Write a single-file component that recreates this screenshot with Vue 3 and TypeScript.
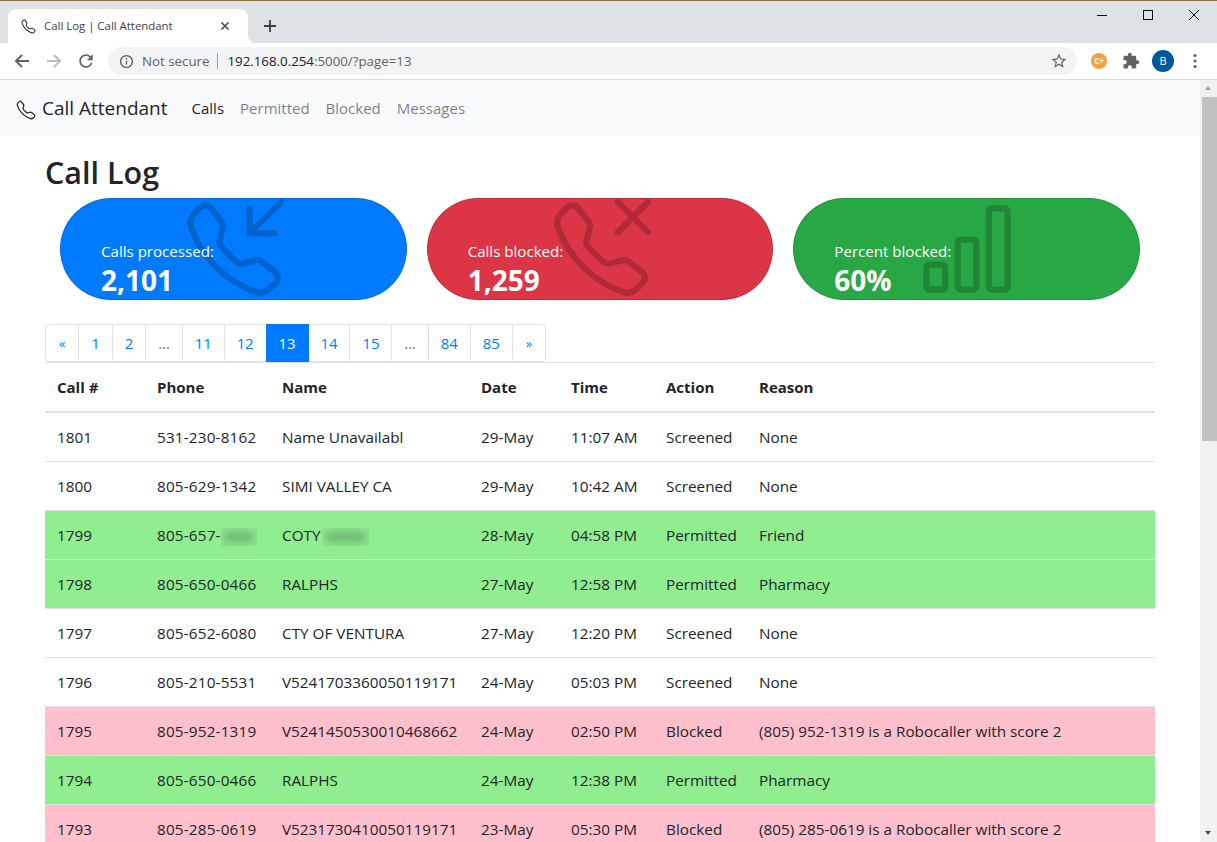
<script setup lang="ts">
interface Call {
  id: number
  phone: string
  name: string
  date: string
  time: string
  action: string
  reason: string
  blurPhone?: boolean
}

const phonePath =
  'M3.925 1.745a.636.636 0 0 0-.951-.059l-.97.970c-.453.453-.62 1.095-.421 1.658A16.470 16.470 0 0 0 5.490 10.510a16.470 16.470 0 0 0 6.196 3.907c.563.198 1.205.032 1.658-.421l.970-.970a.636.636 0 0 0-.060-.951l-2.162-1.682a.636.636 0 0 0-.544-.115l-2.052.513a1.636 1.636 0 0 1-1.554-.430L5.640 8.058a1.636 1.636 0 0 1-.430-1.554l.513-2.052a.636.636 0 0 0-.115-.544L3.925 1.745zM2.267.980a1.636 1.636 0 0 1 2.448.153l1.681 2.162c.309.396.418.913.296 1.400l-.513 2.053a.636.636 0 0 0 .167.604L8.650 9.654a.636.636 0 0 0 .604.167l2.052-.513a1.636 1.636 0 0 1 1.401.296l2.162 1.681c.777.604.849 1.753.153 2.448l-.970.970c-.693.693-1.730.998-2.697.658a17.470 17.470 0 0 1-6.571-4.144A17.470 17.470 0 0 1 .639 4.646c-.34-.967-.035-2.004.658-2.698l.970-.969z'

const pages = ['«', '1', '2', '...', '11', '12', '13', '14', '15', '...', '84', '85', '»']

const calls: Call[] = [
  { id: 1801, phone: '531-230-8162', name: 'Name Unavailabl', date: '29-May', time: '11:07 AM', action: 'Screened', reason: 'None' },
  { id: 1800, phone: '805-629-1342', name: 'SIMI VALLEY CA', date: '29-May', time: '10:42 AM', action: 'Screened', reason: 'None' },
  { id: 1799, phone: '805-657-', name: 'COTY', date: '28-May', time: '04:58 PM', action: 'Permitted', reason: 'Friend', blurPhone: true },
  { id: 1798, phone: '805-650-0466', name: 'RALPHS', date: '27-May', time: '12:58 PM', action: 'Permitted', reason: 'Pharmacy' },
  { id: 1797, phone: '805-652-6080', name: 'CTY OF VENTURA', date: '27-May', time: '12:20 PM', action: 'Screened', reason: 'None' },
  { id: 1796, phone: '805-210-5531', name: 'V5241703360050119171', date: '24-May', time: '05:03 PM', action: 'Screened', reason: 'None' },
  { id: 1795, phone: '805-952-1319', name: 'V5241450530010468662', date: '24-May', time: '02:50 PM', action: 'Blocked', reason: '(805) 952-1319 is a Robocaller with score 2' },
  { id: 1794, phone: '805-650-0466', name: 'RALPHS', date: '24-May', time: '12:38 PM', action: 'Permitted', reason: 'Pharmacy' },
  { id: 1793, phone: '805-285-0619', name: 'V5231730410050119171', date: '23-May', time: '05:30 PM', action: 'Blocked', reason: '(805) 285-0619 is a Robocaller with score 2' },
]

function rowClass(call: Call) {
  if (call.action === 'Permitted') return 'permitted'
  if (call.action === 'Blocked') return 'blocked'
  return ''
}
</script>

<template>
  <div class="window">
    <div class="tabstrip">
      <div class="tab">
        <svg class="tab-icon" viewBox="0 0 16 16" width="15" height="15"><path :d="phonePath" fill="#202124" /></svg>
        <span class="tab-title">Call Log | Call Attendant</span>
        <svg class="tab-close" viewBox="0 0 10 10" width="10" height="10"><path d="M1.500 1.500l7 7M8.500 1.500l-7 7" stroke="#45484c" stroke-width="1.600" /></svg>
      </div>
      <svg class="new-tab" viewBox="0 0 12 12" width="12" height="12"><path d="M6 0v12M0 6h12" stroke="#3c4043" stroke-width="1.800" /></svg>
      <div class="win-controls">
        <svg viewBox="0 0 10 10" width="10" height="10"><path d="M0 5.500h10" stroke="#111" stroke-width="1" /></svg>
        <svg viewBox="0 0 10 10" width="10" height="10"><rect x=".5" y=".5" width="9" height="9" fill="none" stroke="#111" stroke-width="1" /></svg>
        <svg viewBox="0 0 10 10" width="10" height="10"><path d="M0 0l10 10M10 0L0 10" stroke="#111" stroke-width="1" /></svg>
      </div>
    </div>

    <div class="toolbar">
      <svg class="tool" viewBox="0 0 16 16" width="16" height="16"><path d="M15 8H2M8 2L2 8l6 6" fill="none" stroke="#5f6368" stroke-width="2" /></svg>
      <svg class="tool" viewBox="0 0 16 16" width="16" height="16"><path d="M1 8h13M8 2l6 6-6 6" fill="none" stroke="#babcbe" stroke-width="2" /></svg>
      <svg class="tool" viewBox="0 0 24 24" width="20" height="20"><path fill="#5f6368" d="M17.650 6.350A7.958 7.958 0 0 0 12 4c-4.420 0-7.990 3.580-7.990 8s3.570 8 7.990 8c3.730 0 6.840-2.550 7.730-6h-2.080A5.990 5.990 0 0 1 12 18c-3.310 0-6-2.690-6-6s2.690-6 6-6c1.660 0 3.140.690 4.220 1.780L13 11h7V4l-2.350 2.350z" /></svg>
      <div class="omnibox">
        <svg viewBox="0 0 16 16" width="15" height="15"><circle cx="8" cy="8" r="6.300" fill="none" stroke="#5f6368" stroke-width="1.500" /><path d="M8 7.200v4M8 4.500v1.500" stroke="#5f6368" stroke-width="1.500" /></svg>
        <span class="not-secure">Not secure</span>
        <span class="omni-sep"></span>
        <span class="url"><b>192.168.0.254</b>:5000/?page=13</span>
        <svg class="star" viewBox="0 0 24 24" width="18" height="18"><path fill="#5f6368" d="M22 9.240l-7.190-.620L12 2 9.190 8.630 2 9.240l5.460 4.730L5.820 21 12 17.270 18.180 21l-1.630-7.030L22 9.240zM12 15.400l-3.760 2.270 1-4.280-3.320-2.880 4.380-.380L12 6.100l1.710 4.040 4.380.380-3.320 2.880 1 4.280L12 15.400z" /></svg>
      </div>
      <span class="ext-cplus">C+</span>
      <svg class="ext-puzzle" viewBox="0 0 24 24" width="18" height="18"><path fill="#5f6368" d="M20.500 11H19V7c0-1.100-.9-2-2-2h-4V3.500C13 2.120 11.880 1 10.500 1S8 2.120 8 3.500V5H4c-1.100 0-1.990.9-1.990 2v3.800H3.500c1.490 0 2.700 1.210 2.700 2.700s-1.210 2.700-2.700 2.700H2V20c0 1.100.9 2 2 2h3.800v-1.500c0-1.490 1.210-2.700 2.700-2.700 1.490 0 2.700 1.210 2.700 2.700V22H17c1.100 0 2-.9 2-2v-4h1.500c1.380 0 2.500-1.120 2.500-2.500S21.880 11 20.500 11z" /></svg>
      <span class="avatar">B</span>
      <svg class="menu-dots" viewBox="0 0 4 16" width="4" height="16"><circle cx="2" cy="2.500" r="1.600" fill="#5f6368" /><circle cx="2" cy="8" r="1.600" fill="#5f6368" /><circle cx="2" cy="13.500" r="1.600" fill="#5f6368" /></svg>
    </div>

    <div class="viewport">
      <div class="content">
        <nav class="navbar">
          <a class="brand">
            <svg viewBox="0 0 16 16" width="20" height="20"><path :d="phonePath" fill="#212529" /></svg>
            Call Attendant
          </a>
          <a class="nav-link active">Calls</a>
          <a class="nav-link">Permitted</a>
          <a class="nav-link">Blocked</a>
          <a class="nav-link">Messages</a>
        </nav>

        <main class="container">
          <h1>Call Log</h1>

          <div class="stats">
            <div class="stat bg-blue">
              <svg class="stat-icon" viewBox="0 0 16 16">
                <path :d="phonePath" />
                <path d="M15.854.146a.5.5 0 0 1 0 .708L11.707 5H14.500a.5.5 0 0 1 0 1h-4a.5.5 0 0 1-.5-.5v-4a.5.5 0 0 1 1 0v2.793L15.146.146a.5.5 0 0 1 .708 0z" />
              </svg>
              <span class="stat-label">Calls processed:</span>
              <span class="stat-value">2,101</span>
            </div>
            <div class="stat bg-red">
              <svg class="stat-icon" viewBox="0 0 16 16">
                <path :d="phonePath" />
                <path d="M10.700.500l4.800 4.800M15.500.500l-4.800 4.800" fill="none" stroke-width="1" stroke-linecap="round" />
              </svg>
              <span class="stat-label">Calls blocked:</span>
              <span class="stat-value">1,259</span>
            </div>
            <div class="stat bg-green">
              <svg class="stat-icon" viewBox="0 0 16 16">
                <path d="M4 11H2v3h2v-3zm5-4H7v7h2V7zm5-5v12h-2V2h2zm-2-1a1 1 0 0 0-1 1v12a1 1 0 0 0 1 1h2a1 1 0 0 0 1-1V2a1 1 0 0 0-1-1h-2zM6 7a1 1 0 0 1 1-1h2a1 1 0 0 1 1 1v7a1 1 0 0 1-1 1H7a1 1 0 0 1-1-1V7zm-5 4a1 1 0 0 1 1-1h2a1 1 0 0 1 1 1v3a1 1 0 0 1-1 1H2a1 1 0 0 1-1-1v-3z" />
              </svg>
              <span class="stat-label">Percent blocked:</span>
              <span class="stat-value">60%</span>
            </div>
          </div>

          <ul class="pagination">
            <li
              v-for="(p, i) in pages"
              :key="i"
              :class="{ current: p === '13', dots: p === '...', arrow: p === '«' || p === '»' }"
            >{{ p }}</li>
          </ul>

          <table class="calls">
            <thead>
              <tr>
                <th class="c-id">Call #</th>
                <th class="c-phone">Phone</th>
                <th class="c-name">Name</th>
                <th class="c-date">Date</th>
                <th class="c-time">Time</th>
                <th class="c-action">Action</th>
                <th>Reason</th>
              </tr>
            </thead>
            <tbody>
              <tr v-for="call in calls" :key="call.id" :class="rowClass(call)">
                <td>{{ call.id }}</td>
                <td class="phone">{{ call.phone }}<span v-if="call.blurPhone" class="smudge smudge-phone"><i></i></span></td>
                <td>{{ call.name }}<span v-if="call.blurPhone" class="smudge smudge-name"><i></i></span></td>
                <td>{{ call.date }}</td>
                <td>{{ call.time }}</td>
                <td>{{ call.action }}</td>
                <td>{{ call.reason }}</td>
              </tr>
            </tbody>
          </table>
        </main>
      </div>

      <div class="scrollbar">
        <span class="sb-arrow up"></span>
        <span class="sb-thumb"></span>
        <span class="sb-arrow down"></span>
      </div>
    </div>
  </div>
</template>

<style scoped>
.window {
  width: 1217px;
  height: 842px;
  overflow: hidden;
  display: flex;
  flex-direction: column;
  font-family: "Open Sans", "Liberation Sans", sans-serif;
  color: #212529;
  background: #fff;
}

/* browser frame */
.tabstrip {
  height: 42px;
  flex: none;
  display: flex;
  align-items: flex-end;
  background: #dee1e6;
  border-top: 1px solid #8a6a3c;
  padding-left: 8px;
}
.tab {
  position: relative;
  width: 240px;
  height: 34px;
  box-sizing: border-box;
  background: #fff;
  border-radius: 8px 8px 0 0;
  display: flex;
  align-items: center;
  padding: 0 18px 0 13px;
}
.tab::after {
  content: "";
  position: absolute;
  right: -8px;
  bottom: 0;
  width: 8px;
  height: 8px;
  background: radial-gradient(circle at 100% 0, transparent 8px, #fff 8.5px);
}
.tab-title {
  flex: 1;
  margin: 0 0 2px 8px;
  font-size: 11.4px;
  color: #3c4043;
}
.new-tab {
  margin: 0 0 11px 16px;
}
.win-controls {
  margin-left: auto;
  align-self: flex-start;
  display: flex;
  gap: 36px;
  padding: 9px 18px 0 0;
}
.toolbar {
  height: 36px;
  flex: none;
  display: flex;
  align-items: center;
  background: #fff;
  border-bottom: 1px solid #dadce0;
  position: relative;
}
.tool {
  flex: none;
  width: 32px;
}
.tool:first-child {
  margin-left: 6px;
}
.omnibox {
  width: 969px;
  height: 28px;
  margin-left: 6px;
  flex: none;
  box-sizing: border-box;
  display: flex;
  align-items: center;
  padding: 0 9px 0 11px;
  border-radius: 14px;
  background: #f1f3f4;
  font-size: 13.3px;
}
.not-secure {
  margin-left: 8px;
  color: #5f6368;
}
.omni-sep {
  width: 1px;
  height: 16px;
  margin: 0 9px 0 8px;
  background: #9aa0a6;
}
.url {
  color: #5f6368;
}
.url b {
  font-weight: 400;
  color: #202124;
}
.star {
  margin-left: auto;
}
.ext-cplus {
  width: 16px;
  height: 16px;
  margin-left: 14px;
  flex: none;
  border-radius: 50%;
  background: #f0a33e;
  color: #fff;
  font-size: 8px;
  font-weight: 700;
  line-height: 16px;
  text-align: center;
}
.ext-puzzle {
  margin-left: 15px;
  flex: none;
}
.avatar {
  width: 22px;
  height: 22px;
  margin-left: 12px;
  flex: none;
  border-radius: 50%;
  background: #01579b;
  color: #fff;
  font-size: 11px;
  line-height: 22px;
  text-align: center;
}
.menu-dots {
  margin-left: 19px;
  flex: none;
}

/* page area */
.viewport {
  flex: 1;
  min-height: 0;
  display: flex;
}
.content {
  flex: 1;
  min-width: 0;
  overflow: hidden;
}
.scrollbar {
  width: 17px;
  flex: none;
  display: flex;
  flex-direction: column;
  align-items: flex-end;
  background: #f1f1f1;
}
.sb-thumb {
  width: 15px;
  height: 344px;
  background: #c1c1c1;
}
.sb-arrow {
  width: 17px;
  height: 17px;
  flex: none;
  position: relative;
}
.sb-arrow::after {
  content: "";
  position: absolute;
  left: 5px;
  top: 6px;
  border-left: 3.500px solid transparent;
  border-right: 3.500px solid transparent;
}
.sb-arrow.up::after {
  border-bottom: 4px solid #a3a3a3;
}
.sb-arrow.down {
  margin-top: auto;
}
.sb-arrow.down::after {
  border-top: 4px solid #505050;
}

.navbar {
  height: 56px;
  box-sizing: border-box;
  display: flex;
  align-items: center;
  padding: 0 16px;
  background: #f8f9fa;
}
.brand {
  display: flex;
  align-items: center;
  gap: 6px;
  margin-right: 16px;
  font-size: 19px;
  color: #212529;
}
.brand svg {
  margin-top: 4px;
}
.nav-link {
  padding: 0 8px;
  font-size: 15px;
  color: rgba(0, 0, 0, 0.5);
}
.nav-link.active {
  color: rgba(0, 0, 0, 0.9);
}

.container {
  padding: 0 45px;
}
h1 {
  margin: 0;
  height: 62px;
  font-size: 30.5px;
  font-weight: 600;
  line-height: 73px;
}
.stats {
  display: grid;
  grid-template-columns: repeat(3, 1fr);
  gap: 20px;
  padding: 0 15px;
  margin-bottom: 24px;
}
.stat {
  position: relative;
  height: 102px;
  box-sizing: border-box;
  display: flex;
  flex-direction: column;
  justify-content: flex-end;
  padding: 0 0 1px 40px;
  border: 1px solid rgba(0, 0, 0, 0.125);
  border-radius: 51px;
  color: #fff;
}
.bg-blue {
  background: #007bff;
}
.bg-red {
  background: #dc3545;
}
.bg-green {
  background: #28a745;
}
.stat-icon {
  position: absolute;
  left: 123px;
  top: 0;
  width: 100px;
  height: 100px;
  overflow: visible;
  fill: rgba(0, 0, 0, 0.2);
  stroke: none;
}
.bg-red .stat-icon path:last-child {
  fill: none;
  stroke: rgba(0, 0, 0, 0.2);
}
.stat-label {
  position: relative;
  top: 1px;
  font-size: 15.1px;
  line-height: 24px;
}
.stat-value {
  position: relative;
  font-size: 28px;
  font-weight: 700;
  line-height: 36px;
}

.pagination {
  display: flex;
  margin: 0;
  padding: 0;
  list-style: none;
  height: 38px;
}
.pagination li {
  padding: 0 12px;
  margin-left: -1px;
  border: 1px solid #dee2e6;
  color: #007bff;
  font-size: 15px;
  letter-spacing: -0.12px;
  line-height: 36px;
}
.pagination li:first-child {
  margin-left: 0;
  border-radius: 4px 0 0 4px;
}
.pagination li:last-child {
  border-radius: 0 4px 4px 0;
}
.pagination li.current {
  position: relative;
  background: #007bff;
  border-color: #007bff;
  color: #fff;
}
.pagination li.dots {
  color: #6c757d;
}
.pagination li.arrow {
  padding: 0 13px;
  font-size: 13px;
}

.calls {
  width: 100%;
  table-layout: fixed;
  border-collapse: collapse;
  font-size: 15.3px;
}
.calls th,
.calls td {
  box-sizing: border-box;
  padding: 12px;
  line-height: 24px;
  text-align: left;
  white-space: nowrap;
  border-top: 1px solid #dee2e6;
}
.calls th {
  border-bottom: 2px solid #dee2e6;
  font-size: 15px;
  font-weight: 700;
}
.calls td.phone {
  letter-spacing: 0.17px;
}
.c-id {
  width: 100px;
}
.c-phone {
  width: 125px;
}
.c-name {
  width: 199px;
}
.c-date {
  width: 90px;
}
.c-time {
  width: 95px;
}
.c-action {
  width: 93px;
}
.permitted td {
  background: #90ee90;
}
.blocked td {
  background: #ffc0cb;
}
.smudge {
  display: inline-block;
  height: 18px;
  overflow: hidden;
  vertical-align: middle;
  background: #8ee58e;
}
.smudge i {
  display: block;
  height: 8px;
  margin: 5px 4px;
  background: #63ac68;
  filter: blur(4px);
}
.smudge-phone {
  width: 36px;
}
.smudge-name {
  width: 47px;
  margin-left: 1px;
}
</style>

<style>
html,
body {
  margin: 0;
  overflow: hidden;
}
</style>
